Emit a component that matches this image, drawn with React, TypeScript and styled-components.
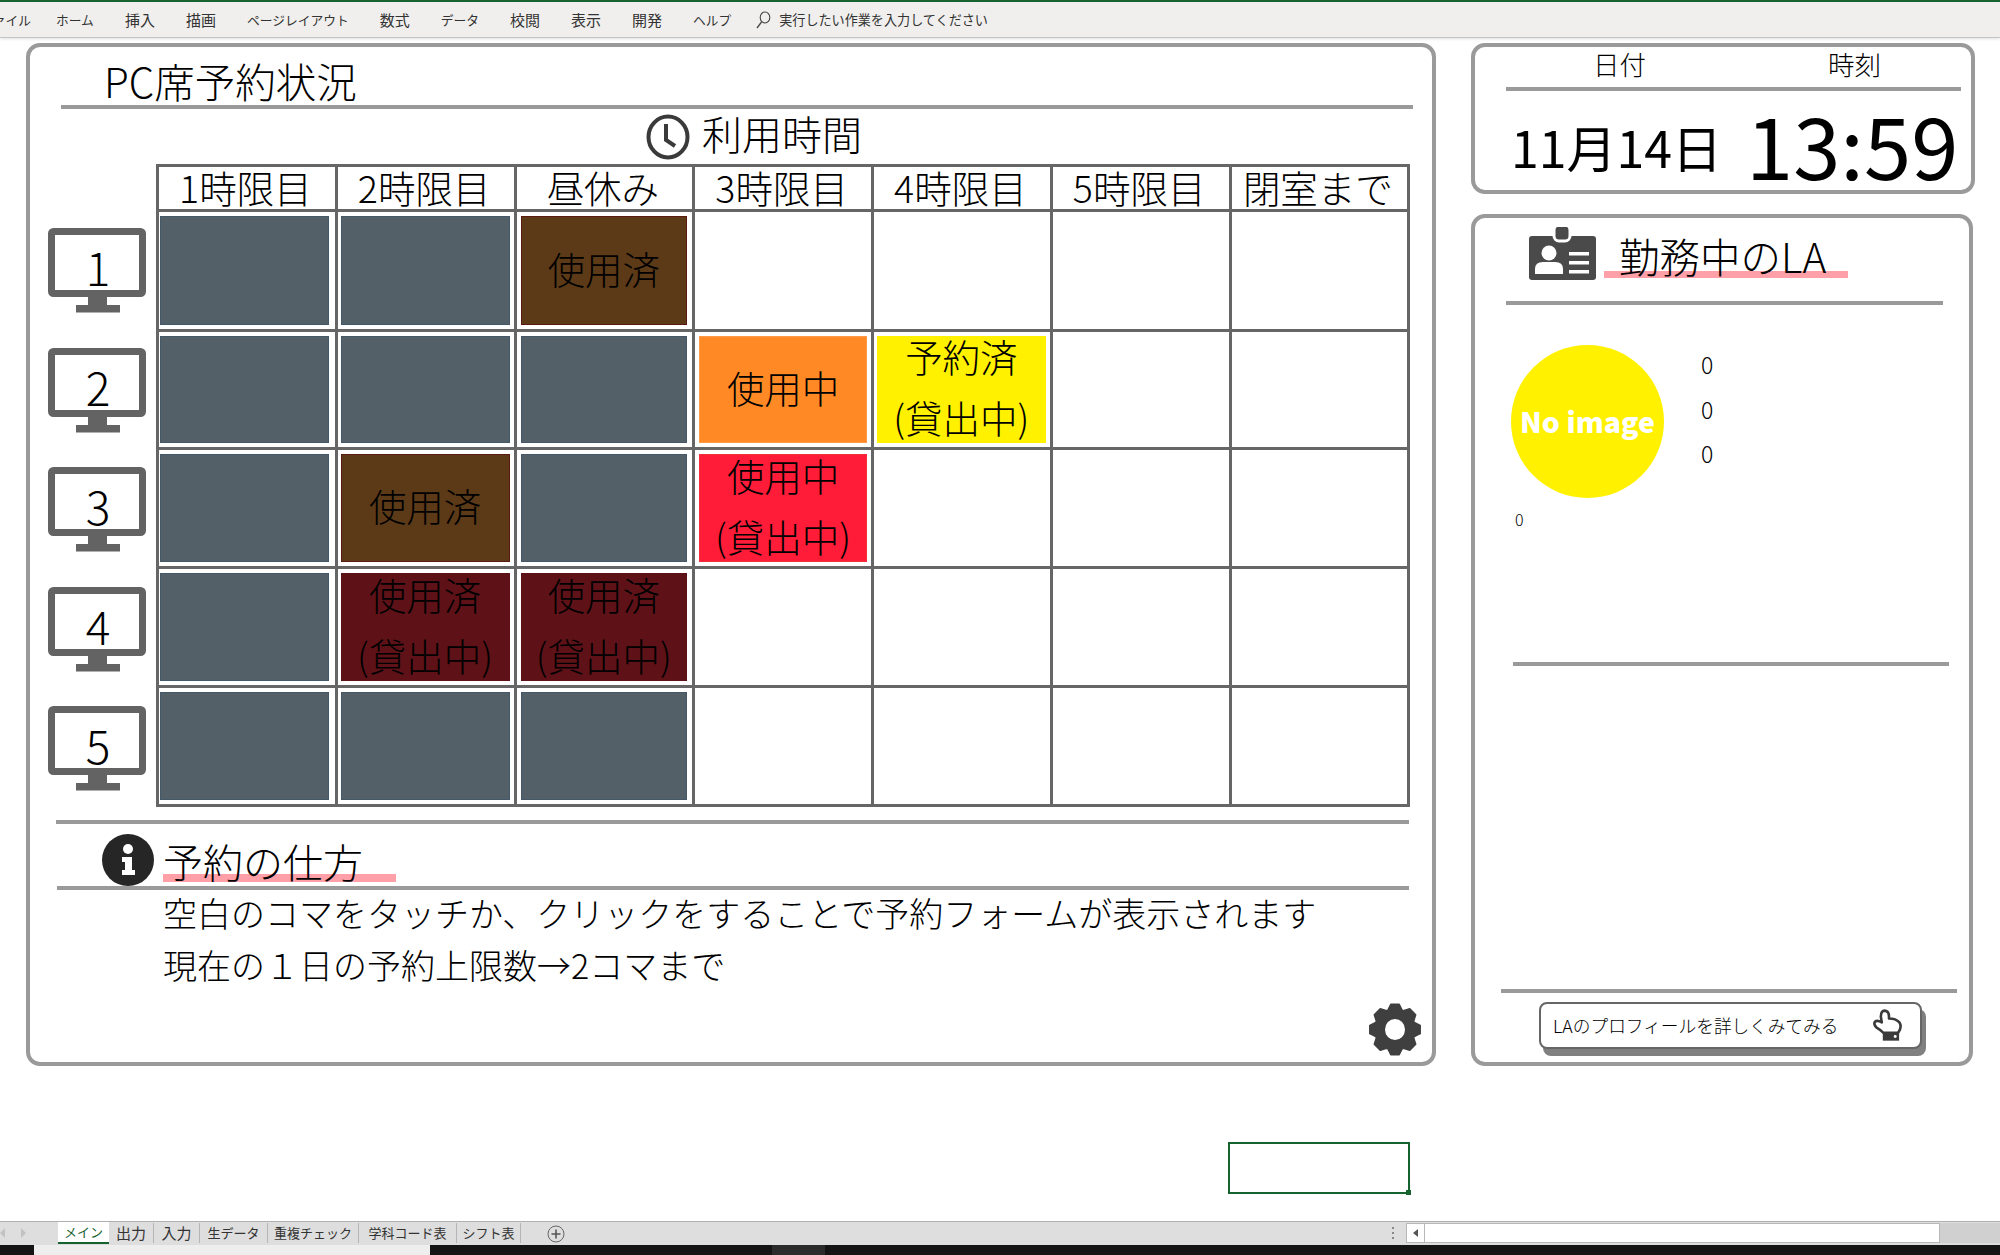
import React from 'react';
import styled, { createGlobalStyle } from 'styled-components';

const FONT = '"Noto Sans CJK JP", "Noto Sans", sans-serif';

const GlobalStyle = createGlobalStyle`
	html, body {
		margin: 0;
		padding: 0;
		background: #fff;
		overflow: hidden;
	}
	* {
		box-sizing: border-box;
	}
`;

const Page = styled.div`
	width: 2000px;
	height: 1255px;
	display: flex;
	flex-direction: column;
	overflow: hidden;
	font-family: ${FONT};
	font-weight: 300;
	color: #000;
`;

const Ribbon = styled.div`
	height: 38px;
	flex: none;
	display: flex;
	align-items: center;
	gap: 31px;
	background: #f0efed;
	border-top: 2px solid #17632f;
	border-bottom: 1px solid #c4c4c4;
	box-shadow: 0 1px 3px rgba(0, 0, 0, 0.12);
	font-weight: 400;
	color: #333;
	white-space: nowrap;
	overflow: hidden;
`;

const RibbonTab = styled.span<{ $kanji: boolean }>`
	flex: none;
	font-size: ${(p) => (p.$kanji ? 15 : 12.75)}px;
	&:first-child {
		margin: 0 -6px 0 -20px;
	}
`;

const RibbonSearch = styled.div`
	display: flex;
	align-items: center;
	gap: 8px;
	margin-left: -7px;
	font-size: 13.1px;
`;

const Sheet = styled.div`
	flex: 1;
	padding: 5px 0 0 26px;
	display: flex;
	flex-direction: column;
`;

const Panels = styled.div`
	display: flex;
	gap: 35px;
`;

const Panel = styled.div<{ $w: number; $h: number }>`
	width: ${(p) => p.$w}px;
	height: ${(p) => p.$h}px;
	flex: none;
	border: 4px solid #9a9a9a;
	border-radius: 14px;
	background: #fff;
`;

const Side = styled.div`
	display: flex;
	flex-direction: column;
	gap: 20px;
`;

const Rule = styled.div<{ $left: number; $width: number; $top?: number }>`
	height: 4px;
	background: #9a9a9a;
	margin-left: ${(p) => p.$left}px;
	margin-top: ${(p) => p.$top || 0}px;
	width: ${(p) => p.$width}px;
`;

const Title = styled.div`
	height: 58px;
	padding: 11px 0 0 74px;
	font-size: 40.5px;
	line-height: 46px;
`;

const UsageHead = styled.div`
	height: 55px;
	display: flex;
	align-items: center;
	gap: 12px;
	padding-left: 616px;
	font-size: 40px;
	line-height: 1;
`;

const UsageText = styled.span`
	padding-bottom: 7px;
`;

const Board = styled.div`
	display: flex;
`;

const Monitors = styled.div`
	width: 98px;
	margin: 0 10px 0 18px;
	padding-top: 64px;
	display: flex;
	flex-direction: column;
	gap: 34.6px;
`;

const MonitorNum = styled.text`
	font-family: ${FONT};
	font-weight: 300;
	font-size: 46px;
	fill: #000;
`;

const Table = styled.div`
	display: grid;
	grid-template-columns: repeat(7, 178.75px);
	grid-template-rows: 45px 120px 117.5px 119.5px 118.5px 119.5px;
	border-right: 3px solid #666;
	border-bottom: 3px solid #666;
`;

const HeadCell = styled.div`
	border-top: 3px solid #666;
	border-left: 3px solid #666;
	display: flex;
	align-items: center;
	justify-content: center;
	font-size: 37.5px;
	line-height: 1;
	padding: 0 3px 2px 0;
`;

const Cell = styled.div<{ $pl: number; $pr: number }>`
	border-top: 3px solid #666;
	border-left: 3px solid #666;
	padding: 4px ${(p) => p.$pr}px 4px ${(p) => p.$pl}px;
	display: flex;
`;

const Fill = styled.div<{ $bg: string; $edge: string }>`
	flex: 1;
	background: ${(p) => p.$bg};
	border: 1px solid ${(p) => p.$edge};
	padding-bottom: 6px;
	display: flex;
	flex-direction: column;
	align-items: center;
	justify-content: center;
	font-size: 37.5px;
	line-height: 61px;
	text-align: center;
	white-space: nowrap;
`;

const InfoRow = styled.div`
	height: 62px;
	padding: 10px 0 0 72px;
	display: flex;
	align-items: flex-start;
	gap: 9px;
`;

const InfoTitle = styled.div`
	width: 233px;
	height: 49px;
	margin-top: 5px;
	font-size: 40px;
	line-height: 44px;
	background: linear-gradient(#ff9fa8, #ff9fa8) no-repeat left 35px / 100% 8px;
`;

const HowTo = styled.div`
	margin: -3px 0 0 133px;
	font-size: 34px;
	line-height: 51.5px;
`;

const GearRow = styled.div`
	display: flex;
	justify-content: flex-end;
	padding: 13px 11px 0 0;
`;

const DateLabels = styled.div`
	height: 40px;
	margin-left: 31px;
	width: 455px;
	display: flex;
	align-items: center;
	padding: 0 0 5px 87px;
	gap: 182px;
	font-size: 26.5px;
	line-height: 1;
`;

const DateValues = styled.div`
	display: flex;
	align-items: center;
	height: 99px;
	padding-left: 36px;
	gap: 24px;
	font-weight: 400;
	white-space: nowrap;
`;

const DateText = styled.div`
	flex: none;
	font-size: 50px;
	line-height: 1;
	margin-top: 11px;
`;

const TimeText = styled.div`
	flex: none;
	font-size: 85px;
	line-height: 1;
	margin-top: 4px;
`;

const LaHead = styled.div`
	height: 83px;
	padding: 9px 0 0 54px;
	display: flex;
	align-items: flex-start;
	gap: 8px;
`;

const LaTitle = styled.div`
	width: 244px;
	height: 43px;
	margin-top: 9px;
	padding-left: 15px;
	font-size: 40.5px;
	line-height: 40px;
	white-space: nowrap;
	background: linear-gradient(#ff9fa8, #ff9fa8) no-repeat left 35px / 100% 7px;
`;

const Profile = styled.div`
	display: flex;
	padding: 40px 0 0 36px;
`;

const Avatar = styled.div`
	width: 153px;
	height: 153px;
	padding-bottom: 3px;
	border-radius: 50%;
	background: #fff100;
	color: #fff;
	font-weight: 900;
	font-size: 28.5px;
	display: flex;
	align-items: center;
	justify-content: center;
	white-space: nowrap;
`;

const Counts = styled.div`
	margin: -3px 0 0 37px;
	font-size: 23px;
	line-height: 44.5px;
`;

const SmallCount = styled.div`
	margin: 11px 0 0 40px;
	font-size: 16px;
	line-height: 20px;
`;

const ProfileButton = styled.div`
	margin: 9px 0 0 64px;
	width: 383px;
	height: 47px;
	border: 2px solid #666;
	border-radius: 8px;
	background: #fff;
	box-shadow: 4px 7px 0 #808080;
	display: flex;
	align-items: center;
	justify-content: space-between;
	padding: 0 16px 2px 12px;
	font-size: 17.7px;
	white-space: nowrap;
`;

const SelectedCell = styled.div`
	position: relative;
	width: 182px;
	height: 52px;
	margin: 76px 0 0 1202px;
	border: 2px solid #17632f;
	&::after {
		content: '';
		position: absolute;
		right: -3px;
		bottom: -3px;
		width: 5px;
		height: 5px;
		background: #17632f;
	}
`;

const TabBar = styled.div`
	height: 24px;
	flex: none;
	background: #dedede;
	border-top: 1px solid #b0b0b0;
	display: flex;
	align-items: flex-start;
	font-weight: 400;
	color: #333;
`;

const TabNav = styled.div`
	width: 58px;
	height: 22px;
	flex: none;
	display: flex;
	align-items: center;
	gap: 14px;
`;

const SheetTab = styled.div<{ $w: number; $size?: number; $active?: boolean }>`
	width: ${(p) => p.$w}px;
	height: ${(p) => (p.$active ? 22 : 20)}px;
	margin-top: ${(p) => (p.$active ? 0 : 1)}px;
	padding-bottom: 2px;
	flex: none;
	display: flex;
	align-items: center;
	justify-content: center;
	white-space: nowrap;
	font-size: ${(p) => p.$size || 13}px;
	background: ${(p) => (p.$active ? '#fff' : 'transparent')};
	color: ${(p) => (p.$active ? '#17632f' : '#333')};
	border-bottom: ${(p) => (p.$active ? '2px solid #17632f' : 'none')};
	border-right: ${(p) => (p.$active ? 'none' : '1px solid #b5b5b5')};
`;

const AddTab = styled.div`
	margin: 3px 0 0 26px;
	flex: none;
	line-height: 0;
`;

const Dots = styled.div`
	margin: 5px 7px 0 821px;
	width: 13px;
	display: flex;
	flex-direction: column;
	align-items: center;
	gap: 3px;
	flex: none;
	& span {
		width: 2px;
		height: 2px;
		background: #888;
	}
`;

const ScrollBar = styled.div`
	margin-top: 1px;
	height: 20px;
	flex: 1;
	display: flex;
	background: #d0d0d0;
`;

const ScrollBtn = styled.div`
	width: 19px;
	background: #fff;
	border: 1px solid #b8b8b8;
	display: flex;
	align-items: center;
	justify-content: center;
	&::before {
		content: '';
		border: 4px solid transparent;
		border-right: 5px solid #555;
		border-left: none;
	}
`;

const ScrollThumb = styled.div`
	width: 515px;
	background: #fff;
	border: 1px solid #b8b8b8;
	border-left: none;
`;

const Taskbar = styled.div`
	height: 10px;
	flex: none;
	display: flex;
	background: #141414;
`;

const TaskPart = styled.div<{ $w: number; $bg: string }>`
	width: ${(p) => p.$w}px;
	background: ${(p) => p.$bg};
`;

const ribbonTabs = [
	{ name: 'ファイル', kanji: false },
	{ name: 'ホーム', kanji: false },
	{ name: '挿入', kanji: true },
	{ name: '描画', kanji: true },
	{ name: 'ページレイアウト', kanji: false },
	{ name: '数式', kanji: true },
	{ name: 'データ', kanji: false },
	{ name: '校閲', kanji: true },
	{ name: '表示', kanji: true },
	{ name: '開発', kanji: true },
	{ name: 'ヘルプ', kanji: false },
];
const periods = ['1時限目', '2時限目', '昼休み', '3時限目', '4時限目', '5時限目', '閉室まで'];
const sheetTabs = [
	{ name: '出力', w: 45, size: 15 },
	{ name: '入力', w: 46, size: 15 },
	{ name: '生データ', w: 68 },
	{ name: '重複チェック', w: 91 },
	{ name: '学科コード表', w: 98 },
	{ name: 'シフト表', w: 64 },
];

const insets = [
	[1, 6],
	[3, 4],
	[4, 5],
	[4, 4],
	[3, 4],
	[3, 4],
	[3, 4],
];

type Kind = 'past' | 'used' | 'usedLoan' | 'now' | 'nowLoan' | 'booked' | '';

const styles: Record<string, { bg: string; edge: string; lines: string[] }> = {
	past: { bg: '#546068', edge: '#45586a', lines: [] },
	used: { bg: '#5c3a17', edge: '#5b1a0f', lines: ['使用済'] },
	usedLoan: { bg: '#5e1218', edge: '#5e1218', lines: ['使用済', '(貸出中)'] },
	now: { bg: '#ff8a25', edge: '#ff9a4a', lines: ['使用中'] },
	nowLoan: { bg: '#ff1c38', edge: '#f0303a', lines: ['使用中', '(貸出中)'] },
	booked: { bg: '#fff100', edge: '#fff100', lines: ['予約済', '(貸出中)'] },
};

const rows: Kind[][] = [
	['past', 'past', 'used', '', '', '', ''],
	['past', 'past', 'past', 'now', 'booked', '', ''],
	['past', 'used', 'past', 'nowLoan', '', '', ''],
	['past', 'usedLoan', 'usedLoan', '', '', '', ''],
	['past', 'past', 'past', '', '', '', ''],
];

const gearPath = () => {
	const pts: string[] = [];
	const cx = 26;
	const cy = 26.5;
	for (let i = 0; i < 8; i++) {
		const a = (i * Math.PI) / 4 - Math.PI / 2;
		const step = Math.PI / 8;
		const list: [number, number][] = [
			[a - step * 0.92, 20.5],
			[a - step * 0.42, 25.5],
			[a + step * 0.42, 25.5],
			[a + step * 0.92, 20.5],
		];
		list.forEach(([ang, r]) => {
			pts.push(`${(cx + r * Math.cos(ang)).toFixed(1)} ${(cy + r * Math.sin(ang)).toFixed(1)}`);
		});
	}
	return `M${pts.join('L')}Z`;
};

const Monitor = ({ n }: { n: number }) => (
	<svg width="98" height="85" viewBox="0 0 98 85">
		<rect x="3.5" y="3.5" width="91" height="62" rx="2" fill="#fff" stroke="#636363" strokeWidth="7" />
		<rect x="40" y="69" width="19" height="9" fill="#636363" />
		<rect x="28" y="77" width="44" height="7.5" fill="#636363" />
		<MonitorNum x="50" y="58" textAnchor="middle">
			{n}
		</MonitorNum>
	</svg>
);

const ClockIcon = () => (
	<svg width="44" height="46" viewBox="0 0 44 46">
		<ellipse cx="22" cy="23" rx="19.5" ry="20.5" fill="none" stroke="#3a3a3a" strokeWidth="4" />
		<path d="M20 10V26L29 32" fill="none" stroke="#3a3a3a" strokeWidth="4" />
	</svg>
);

const InfoIcon = () => (
	<svg width="52" height="52" viewBox="0 0 52 52">
		<circle cx="26" cy="26" r="26" fill="#262626" />
		<circle cx="26" cy="15" r="5" fill="#fff" />
		<path d="M20 23H30V36H33V41H20V36H23V28H20Z" fill="#fff" />
	</svg>
);

const GearIcon = () => (
	<svg width="52" height="53" viewBox="0 0 52 53">
		<path d={gearPath()} fill="#3f3f3f" stroke="#3f3f3f" strokeWidth="1.5" strokeLinejoin="round" />
		<ellipse cx="26" cy="26.5" rx="10" ry="10.5" fill="#fff" />
	</svg>
);

const BadgeIcon = () => (
	<svg width="67" height="53" viewBox="0 0 67 53">
		<rect x="0" y="9" width="67" height="44" rx="3" fill="#4a4a4a" />
		<rect x="25" y="-2" width="16" height="16" rx="5" fill="#4a4a4a" stroke="#fff" strokeWidth="3" />
		<rect x="28.5" y="0" width="9" height="12" rx="3" fill="#4a4a4a" />
		<circle cx="20" cy="26" r="7.5" fill="#fff" />
		<path d="M6 47V42Q6 35 14 35H26Q34 35 34 42V47Z" fill="#fff" />
		<rect x="40" y="25" width="20" height="3.5" fill="#fff" />
		<rect x="40" y="34" width="20" height="3.5" fill="#fff" />
		<rect x="40" y="43" width="20" height="3.5" fill="#fff" />
	</svg>
);

const HandIcon = () => (
	<svg width="31" height="32" viewBox="0 0 95 98">
		<path
			d="M24 24Q24 5 36 5Q49 6 49 24V29Q70 29 81 41Q90 54 77 73H32Q22 63 10 56Q1 47 6 39Q13 33 27 41Z"
			fill="#fff"
			stroke="#3a3a3a"
			strokeWidth="8"
			strokeLinejoin="round"
		/>
		<rect x="30" y="73" width="50" height="24" fill="#3a3a3a" />
		<circle cx="68" cy="84" r="4.5" fill="#fff" />
	</svg>
);

const SearchIcon = () => (
	<svg width="16" height="18" viewBox="0 0 16 18">
		<ellipse cx="10" cy="6.5" rx="4.8" ry="5.5" fill="none" stroke="#444" strokeWidth="1.1" />
		<path d="M6.5 11L2 17" stroke="#444" strokeWidth="1.3" />
	</svg>
);

const PlusIcon = () => (
	<svg width="18" height="18" viewBox="0 0 18 18">
		<circle cx="9" cy="9" r="8" fill="none" stroke="#666" strokeWidth="1" />
		<path d="M9 4.5V13.5M4.5 9H13.5" stroke="#555" strokeWidth="1.6" />
	</svg>
);

const NavArrow = ({ flip }: { flip?: boolean }) => (
	<svg width="6" height="10" viewBox="0 0 6 10" style={{ transform: flip ? 'scaleX(-1)' : undefined }}>
		<path d="M5 0V10L0 5Z" fill="#c2c2c2" />
	</svg>
);

const App = () => (
	<Page>
		<GlobalStyle />
		<Ribbon>
			{ribbonTabs.map((t) => (
				<RibbonTab key={t.name} $kanji={t.kanji}>
					{t.name}
				</RibbonTab>
			))}
			<RibbonSearch>
				<SearchIcon />
				<span>実行したい作業を入力してください</span>
			</RibbonSearch>
		</Ribbon>

		<Sheet>
			<Panels>
				<Panel $w={1410} $h={1023}>
					<Title>PC席予約状況</Title>
					<Rule $left={31} $width={1352} />
					<UsageHead>
						<ClockIcon />
						<UsageText>利用時間</UsageText>
					</UsageHead>
					<Board>
						<Monitors>
							{[1, 2, 3, 4, 5].map((n) => (
								<Monitor key={n} n={n} />
							))}
						</Monitors>
						<Table>
							{periods.map((p) => (
								<HeadCell key={p}>{p}</HeadCell>
							))}
							{rows.map((row, r) =>
								row.map((kind, c) => (
									<Cell key={`${r}-${c}`} $pl={insets[c][0]} $pr={insets[c][1]}>
										{kind && (
											<Fill $bg={styles[kind].bg} $edge={styles[kind].edge}>
												{styles[kind].lines.map((line) => (
													<span key={line}>{line}</span>
												))}
											</Fill>
										)}
									</Cell>
								)),
							)}
						</Table>
					</Board>
					<Rule $left={26} $width={1353} $top={13} />
					<InfoRow>
						<InfoIcon />
						<InfoTitle>予約の仕方</InfoTitle>
					</InfoRow>
					<Rule $left={27} $width={1352} />
					<HowTo>
						空白のコマをタッチか、クリックをすることで予約フォームが表示されます
						<br />
						現在の１日の予約上限数→2コマまで
					</HowTo>
					<GearRow>
						<GearIcon />
					</GearRow>
				</Panel>

				<Side>
					<Panel $w={504} $h={151}>
						<DateLabels>
							<span>日付</span>
							<span>時刻</span>
						</DateLabels>
						<Rule $left={31} $width={455} />
						<DateValues>
							<DateText>11月14日</DateText>
							<TimeText>13:59</TimeText>
						</DateValues>
					</Panel>
					<Panel $w={502} $h={852}>
						<LaHead>
							<BadgeIcon />
							<LaTitle>勤務中のLA</LaTitle>
						</LaHead>
						<Rule $left={31} $width={437} />
						<Profile>
							<Avatar>No image</Avatar>
							<Counts>
								<div>0</div>
								<div>0</div>
								<div>0</div>
							</Counts>
						</Profile>
						<SmallCount>0</SmallCount>
						<Rule $left={38} $width={436} $top={133} />
						<Rule $left={26} $width={456} $top={323} />
						<ProfileButton>
							<span>LAのプロフィールを詳しくみてみる</span>
							<HandIcon />
						</ProfileButton>
					</Panel>
				</Side>
			</Panels>
			<SelectedCell />
		</Sheet>

		<TabBar>
			<TabNav>
				<NavArrow />
				<NavArrow flip />
			</TabNav>
			<SheetTab $w={51} $active>
				メイン
			</SheetTab>
			{sheetTabs.map((t) => (
				<SheetTab key={t.name} $w={t.w} $size={t.size}>
					{t.name}
				</SheetTab>
			))}
			<AddTab>
				<PlusIcon />
			</AddTab>
			<Dots>
				<span />
				<span />
				<span />
			</Dots>
			<ScrollBar>
				<ScrollBtn />
				<ScrollThumb />
			</ScrollBar>
		</TabBar>
		<Taskbar>
			<TaskPart $w={34} $bg="#141414" />
			<TaskPart $w={396} $bg="#eeeeee" />
			<TaskPart $w={342} $bg="#141414" />
			<TaskPart $w={53} $bg="#2b2b2b" />
		</Taskbar>
	</Page>
);

export default App;
